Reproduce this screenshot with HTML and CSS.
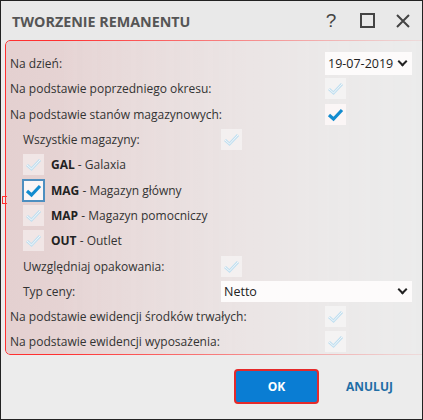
FILE: index.html
```
<!DOCTYPE html>
<html lang="pl">
<head>
    <meta charset="UTF-8">
    <meta name="viewport" content="width=device-width, initial-scale=1.0">
    <title>Tworzenie remanentu</title>
    <link rel="stylesheet" href="styles.css">
</head>
<body>
    <div class="dialog">
        <header class="titlebar">
            <h1>TWORZENIE REMANENTU</h1>
            <div class="controls">
                <span class="ctl help">?</span>
                <span class="ctl"><span class="maximize"></span></span>
                <span class="ctl">
                    <svg width="14" height="14" viewBox="0 0 14 14"><path d="M1 1 L13 13 M13 1 L1 13" stroke="#444" stroke-width="2" fill="none"/></svg>
                </span>
            </div>
        </header>

        <section class="form">
            <div class="row">
                <span class="label">Na dzień:</span>
                <div class="select date">19-07-2019 <span class="chev"></span></div>
            </div>
            <div class="row">
                <span class="label">Na podstawie poprzedniego okresu:</span>
                <span class="check"></span>
            </div>
            <div class="row">
                <span class="label">Na podstawie stanów magazynowych:</span>
                <span class="check on"></span>
            </div>
            <div class="row sub">
                <span class="label">Wszystkie magazyny:</span>
                <span class="check"></span>
            </div>
            <div class="row store">
                <span class="check"></span>
                <span><b>GAL</b> - Galaxia</span>
            </div>
            <div class="row store">
                <span class="check on focus"></span>
                <span><b>MAG</b> - Magazyn główny</span>
            </div>
            <div class="row store">
                <span class="check"></span>
                <span><b>MAP</b> - Magazyn pomocniczy</span>
            </div>
            <div class="row store">
                <span class="check"></span>
                <span><b>OUT</b> - Outlet</span>
            </div>
            <div class="row sub">
                <span class="label">Uwzględniaj opakowania:</span>
                <span class="check"></span>
            </div>
            <div class="row sub">
                <span class="label">Typ ceny:</span>
                <div class="select wide">Netto <span class="chev"></span></div>
            </div>
            <div class="row">
                <span class="label">Na podstawie ewidencji środków trwałych:</span>
                <span class="check"></span>
            </div>
            <div class="row">
                <span class="label">Na podstawie ewidencji wyposażenia:</span>
                <span class="check"></span>
            </div>
        </section>

        <footer class="buttons">
            <button class="ok">OK</button>
            <button class="cancel">ANULUJ</button>
        </footer>
    </div>
</body>
</html>
```

FILE: styles.css
```
body {
    margin: 0;
    padding: 0;
    font-family: "Open Sans", "Liberation Sans", sans-serif;
    background: #fff;
}

.dialog {
    width: 421px;
    height: 418px;
    border: 1px solid #222;
    background: #ececec;
    position: relative;
    overflow: hidden;
}

/* title bar */
.titlebar {
    height: 39px;
    display: flex;
    align-items: center;
    padding: 0 11px 0 11px;
    background: #e9e9e9;
}

.titlebar h1 {
    flex: 1;
    margin: 0;
    font-size: 14.3px;
    font-weight: 700;
    color: #555;
    padding-top: 2px;
}

.controls {
    display: flex;
    align-items: center;
    gap: 20px;
}

.ctl {
    display: flex;
    align-items: center;
    justify-content: center;
    width: 16px;
    height: 20px;
    color: #444;
}

.help {
    font-size: 19px;
    font-family: "Liberation Sans", sans-serif;
}

.maximize {
    width: 11px;
    height: 11px;
    border: 2px solid #444;
}

/* highlighted form */
.form {
    position: relative;
    margin-left: 4px;
    padding: 11px 0 3px 5px;
    height: 301px;
    font-size: 12px;
    color: #333;
}

.form::before {
    content: "";
    position: absolute;
    inset: 0 -40px 0 0;
    border: 1.5px solid #ff3030;
    border-radius: 5px;
    background: linear-gradient(to right, #e4d0d0, #eadede 55%, #ececec);
    -webkit-mask-image: linear-gradient(to right, #000 0%, #000 12%, rgba(0,0,0,0.25) 75%, transparent 100%);
    mask-image: linear-gradient(to right, #000 0%, #000 12%, rgba(0,0,0,0.25) 75%, transparent 100%);
    z-index: 0;
}

.form::after {
    content: "";
    position: absolute;
    left: -3px;
    top: 156px;
    width: 4px;
    height: 6px;
    border-left: 1px solid #ff3030;
    border-top: 1px solid #ff3030;
    border-bottom: 1px solid #ff3030;
}

.row {
    position: relative;
    z-index: 1;
    height: 25.3px;
    display: flex;
    align-items: center;
}

.row .label {
    width: 315px;
}

.row.sub {
    padding-left: 13px;
}

.row.sub .label {
    width: 198px;
}

.row.store {
    padding-left: 13px;
    gap: 7px;
}

.row.store b {
    font-weight: 700;
    color: #222;
}

/* checkboxes */
.check {
    width: 21px;
    height: 21px;
    box-sizing: border-box;
    background: rgba(255, 255, 255, 0.45) url("data:image/svg+xml,%3Csvg xmlns='http://www.w3.org/2000/svg' width='21' height='21'%3E%3Cpath d='M4 11 L8.5 15 L17 6' stroke='%23c0dff0' stroke-width='3' fill='none'/%3E%3Cpath d='M4 11 L8.5 15 L17 6' stroke='%23f4f8fa' stroke-width='1' fill='none'/%3E%3C/svg%3E") center no-repeat;
}

.check.on {
    background-image: url("data:image/svg+xml,%3Csvg xmlns='http://www.w3.org/2000/svg' width='21' height='21'%3E%3Cpath d='M4 11 L8.5 15 L17 6' stroke='%23138ccf' stroke-width='3.2' fill='none'/%3E%3C/svg%3E");
    background-color: #fbf6f6;
}

.check.focus {
    width: 23px;
    height: 23px;
    border: 2px solid #4e8fc0;
    margin-left: -1px;
    margin-right: -1px;
}

/* selects */
.select {
    height: 23px;
    box-sizing: border-box;
    background: #fdfbfb;
    display: flex;
    align-items: center;
    justify-content: space-between;
    padding: 0 6px 0 3px;
    font-size: 12.5px;
    color: #222;
}

.select.date {
    width: 87px;
}

.select.wide {
    width: 191px;
    height: 21px;
}

.chev {
    width: 5px;
    height: 5px;
    border-right: 2px solid #222;
    border-bottom: 2px solid #222;
    transform: rotate(45deg);
    margin-top: -4px;
}

/* footer buttons */
.buttons {
    display: flex;
    align-items: center;
    padding: 14px 0 0 233px;
    gap: 27px;
}

.buttons button {
    font-family: "Open Sans", sans-serif;
    font-weight: 700;
    font-size: 12px;
    border: none;
    background: none;
    cursor: pointer;
}

.ok {
    width: 85px;
    height: 35px;
    color: #fff;
    background: #0a7dd3 !important;
    border: 2px solid #e52a2a !important;
    border-radius: 4px;
}

.cancel {
    color: #1f6ea6;
    padding: 0;
}
```
